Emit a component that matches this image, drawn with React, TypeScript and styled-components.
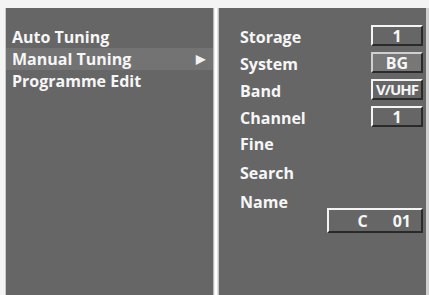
import React from 'react';
import styled, { createGlobalStyle } from 'styled-components';

// 全体スタイル
const GlobalStyle = createGlobalStyle`
    html, body {
        margin: 0;
        padding: 0;
        background: #f4f4f4;
    }
    body {
        font-family: "Open Sans", "Noto Sans", "Liberation Sans", sans-serif;
    }
`;

// 画面の外枠
const Frame = styled.div`
    width: 429px;
    height: 295px;
    padding: 8px 0 0 5px;
    box-sizing: border-box;
`;

const Screen = styled.div`
    display: flex;
    height: 287px;
    border-left: 1px solid #c9c9c9;
    border-right: 3px solid #cfcfcf;
    box-sizing: border-box;
`;

const Panel = styled.div<{ $width: number }>`
    width: ${(p) => p.$width}px;
    flex-shrink: 0;
    background: #666666;
    color: #f6f6f6;
    font-weight: 700;
    font-size: 16px;
    box-sizing: border-box;
`;

// 左右パネルの仕切り
const Divider = styled.div`
    width: 6px;
    flex-shrink: 0;
    background: linear-gradient(to right, #9a9a9a 0, #d8d8d8 1px, #ffffff 2px, #ffffff 4px, #c4c4c4 5px);
`;

// 左メニュー
const MenuList = styled.div`
    display: flex;
    flex-direction: column;
    padding-top: 18px;
`;

const MenuItem = styled.div<{ $active?: boolean }>`
    display: flex;
    align-items: center;
    justify-content: space-between;
    height: 22px;
    padding: 0 8px 0 6px;
    line-height: 22px;
    background: ${(p) => (p.$active ? '#737373' : 'transparent')};
`;

const Arrow = styled.span`
    font-size: 12px;
    color: #f2f2f2;
`;

// 右の設定リスト
const SettingList = styled.div`
    display: flex;
    flex-direction: column;
    padding: 14px 3px 0 21px;
`;

const SettingRow = styled.div<{ $tall?: boolean }>`
    display: flex;
    align-items: flex-start;
    justify-content: space-between;
    height: ${(p) => (p.$tall ? 29 : 27)}px;
    line-height: ${(p) => (p.$tall ? 29 : 27)}px;
`;

const NameRow = styled.div`
    display: flex;
    align-items: flex-start;
    justify-content: space-between;
    line-height: 29px;
`;

const Label = styled.span<{ $shift?: number }>`
    margin-top: ${(p) => p.$shift ?? 0}px;
`;

const ValueBox = styled.div<{ $active?: boolean; $wide?: boolean }>`
    display: flex;
    align-items: center;
    justify-content: ${(p) => (p.$wide ? 'flex-end' : 'center')};
    gap: 25px;
    width: ${(p) => (p.$wide ? 96 : 52)}px;
    height: ${(p) => (p.$wide ? 25 : 21)}px;
    padding-right: ${(p) => (p.$wide ? 10 : 0)}px;
    margin-top: ${(p) => (p.$wide ? 20 : 3)}px;
    box-sizing: border-box;
    line-height: 1;
    background: ${(p) => (p.$active ? '#777777' : '#666666')};
    border-top: 2px solid ${(p) => (p.$active ? '#cfcfcf' : '#f4f4f4')};
    border-left: 2px solid ${(p) => (p.$active ? '#cfcfcf' : '#f4f4f4')};
    border-right: 2px solid #2a2a2a;
    border-bottom: 2px solid #2a2a2a;
`;

const Condensed = styled.span`
    font-size: 15px;
    letter-spacing: -1px;
`;

const menuItems = ['Auto Tuning', 'Manual Tuning', 'Programme Edit'];

const settings: { label: string; value?: React.ReactNode; active?: boolean }[] = [
    { label: 'Storage', value: '1' },
    { label: 'System', value: 'BG', active: true },
    { label: 'Band', value: <Condensed>V/UHF</Condensed> },
    { label: 'Channel', value: '1' },
];

export default function App() {
    return (
        <>
            <GlobalStyle />
            <Frame>
                <Screen>
                    <Panel $width={207}>
                        <MenuList>
                            {menuItems.map((item, i) => (
                                <MenuItem key={item} $active={i === 1}>
                                    <span>{item}</span>
                                    {i === 1 && <Arrow>▶</Arrow>}
                                </MenuItem>
                            ))}
                        </MenuList>
                    </Panel>
                    <Divider />
                    <Panel $width={207}>
                        <SettingList>
                            {settings.map((s) => (
                                <SettingRow key={s.label}>
                                    <Label $shift={2}>{s.label}</Label>
                                    <ValueBox $active={s.active}>{s.value}</ValueBox>
                                </SettingRow>
                            ))}
                            <SettingRow $tall>
                                <Label>Fine</Label>
                            </SettingRow>
                            <SettingRow $tall>
                                <Label>Search</Label>
                            </SettingRow>
                            <NameRow>
                                <Label>Name</Label>
                                <ValueBox $wide>
                                    <span>C</span>
                                    <span>01</span>
                                </ValueBox>
                            </NameRow>
                        </SettingList>
                    </Panel>
                </Screen>
            </Frame>
        </>
    );
}
